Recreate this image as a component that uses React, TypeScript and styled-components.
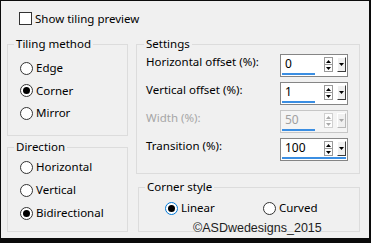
import React from "react"
import styled, { createGlobalStyle } from "styled-components"

const GlobalStyle = createGlobalStyle`
  html, body {
    margin: 0;
    padding: 0;
    background: #f0f0f0;
  }
  body {
    font-family: "Noto Sans", "Open Sans", sans-serif;
    font-size: 11.5px;
    color: #000;
  }
`

interface ArrowProps {
  up?: boolean
  color: string
}

const Arrow: React.FC<ArrowProps> = ({ up, color }) => (
  <svg width="5" height="3" viewBox="0 0 5 3">
    <polygon points={up ? "0,3 2.5,0 5,3" : "0,0 5,0 2.5,3"} fill={color} />
  </svg>
)

interface RadioProps {
  label: string
  checked?: boolean
  focused?: boolean
  width?: number
}

const Radio: React.FC<RadioProps> = ({ label, checked, focused, width }) => (
  <S.RadioRow $width={width}>
    <S.RadioCircle $focused={focused}>{checked && <S.RadioDot />}</S.RadioCircle>
    {label}
  </S.RadioRow>
)

interface SpinProps {
  label: string
  value: string
  fill: number
  disabled?: boolean
}

const SpinRow: React.FC<SpinProps> = ({ label, value, fill, disabled }) => {
  const arrow = disabled ? "#a8a8a8" : "#000"
  return (
    <S.FieldRow>
      <S.FieldLabel $disabled={disabled}>{label}</S.FieldLabel>
      <S.Spin $disabled={disabled}>
        <S.SpinTop>
          <S.SpinValue $disabled={disabled}>{value}</S.SpinValue>
          <S.UpDown>
            <S.Step $disabled={disabled}>
              <Arrow up color={arrow} />
            </S.Step>
            <S.Step $disabled={disabled}>
              <Arrow color={arrow} />
            </S.Step>
          </S.UpDown>
          <S.Drop $disabled={disabled}>
            <Arrow color={arrow} />
          </S.Drop>
        </S.SpinTop>
        <S.Bar $fill={fill} />
      </S.Spin>
    </S.FieldRow>
  )
}

export default function App() {
  return (
    <>
      <GlobalStyle />
      <S.Frame>
        <S.Header>
          <S.CheckBox />
          Show tiling preview
        </S.Header>
        <S.Columns>
          <S.Column $gap={3}>
            <S.Group $h={100} $pad={12} $top={8} $gap={6.5}>
              <S.Legend $shift={-6}>Tiling method</S.Legend>
              <Radio label="Edge" />
              <Radio label="Corner" checked />
              <Radio label="Mirror" />
            </S.Group>
            <S.Group $h={93} $pad={12} $top={4} $gap={7}>
              <S.Legend $shift={-6}>Direction</S.Legend>
              <Radio label="Horizontal" />
              <Radio label="Vertical" />
              <Radio label="Bidirectional" checked />
            </S.Group>
          </S.Column>
          <S.Column $gap={5}>
            <S.Group $h={138} $pad={9} $right={11} $top={2} $gap={5}>
              <S.Legend $shift={-2}>Settings</S.Legend>
              <SpinRow label="Horizontal offset (%):" value="0" fill={33} />
              <SpinRow label="Vertical offset (%):" value="1" fill={33} />
              <SpinRow label="Width (%):" value="50" fill={33} disabled />
              <SpinRow label="Transition (%):" value="100" fill={64} />
            </S.Group>
            <S.Group $h={53} $pad={26} $top={5} $gap={0} $indent={2}>
              <S.Legend $shift={-20}>Corner style</S.Legend>
              <S.OptionLine>
                <Radio label="Linear" checked focused width={98} />
                <Radio label="Curved" />
              </S.OptionLine>
            </S.Group>
          </S.Column>
        </S.Columns>
        <S.Watermark>©ASDwedesigns_2015</S.Watermark>
      </S.Frame>
    </>
  )
}

const S = {
  Frame: styled.div`
    position: relative;
    box-sizing: border-box;
    width: 371px;
    height: 243px;
    border-style: solid;
    border-color: #0b0b0b;
    border-width: 1px 2px 5px 1px;
    background: #f0f0f0;
    padding: 11px 0 0 6px;
    display: flex;
    flex-direction: column;
  `,
  Header: styled.label`
    display: flex;
    align-items: center;
    gap: 3px;
    height: 13px;
    padding-left: 12px;
    line-height: 16px;
  `,
  CheckBox: styled.span`
    box-sizing: border-box;
    width: 13px;
    height: 13px;
    border: 1px solid #333;
    background: #fff;
  `,
  Columns: styled.div`
    display: grid;
    grid-template-columns: 121px 224px;
    column-gap: 8px;
    margin-top: 11px;
  `,
  Column: styled.div<{ $gap: number }>`
    display: flex;
    flex-direction: column;
    gap: ${({ $gap }) => $gap}px;
  `,
  Group: styled.fieldset<{
    $h: number
    $pad: number
    $top: number
    $gap: number
    $right?: number
    $indent?: number
  }>`
    box-sizing: border-box;
    min-width: 0;
    height: ${({ $h }) => $h}px;
    margin: 0 0 0 ${({ $indent }) => $indent || 0}px;
    border: 1px solid #dcdcdc;
    padding: ${({ $top }) => $top}px ${({ $right }) => $right || 0}px 0 ${({ $pad }) => $pad}px;
    display: flex;
    flex-direction: column;
    gap: ${({ $gap }) => $gap}px;
  `,
  Legend: styled.legend<{ $shift: number }>`
    margin-left: ${({ $shift }) => $shift}px;
    padding: 0 2px;
    line-height: 16px;
    font-size: 11.5px;
  `,
  RadioRow: styled.label<{ $width?: number }>`
    display: flex;
    align-items: center;
    gap: 3px;
    height: 16px;
    line-height: 16px;
    width: ${({ $width }) => ($width ? `${$width}px` : "auto")};
    flex: none;
  `,
  RadioCircle: styled.span<{ $focused?: boolean }>`
    box-sizing: border-box;
    width: 13px;
    height: 13px;
    border-radius: 50%;
    border: 1px solid ${({ $focused }) => ($focused ? "#0078d7" : "#333")};
    background: #fff;
    display: flex;
    align-items: center;
    justify-content: center;
  `,
  RadioDot: styled.span`
    width: 7px;
    height: 7px;
    border-radius: 50%;
    background: #000;
  `,
  OptionLine: styled.div`
    display: flex;
    align-items: center;
  `,
  FieldRow: styled.div`
    display: flex;
    align-items: flex-start;
    justify-content: space-between;
    height: 23px;
  `,
  FieldLabel: styled.span<{ $disabled?: boolean }>`
    line-height: 16px;
    color: ${({ $disabled }) => ($disabled ? "#a6a6a6" : "#000")};
  `,
  Spin: styled.div<{ $disabled?: boolean }>`
    box-sizing: border-box;
    width: 68px;
    height: 23px;
    padding-right: 1px;
    border: 1px solid ${({ $disabled }) => ($disabled ? "#c6c6c6" : "#858585")};
    background: ${({ $disabled }) => ($disabled ? "#f4f4f4" : "#fff")};
    display: flex;
    flex-direction: column;
  `,
  SpinTop: styled.div`
    display: flex;
    height: 18px;
  `,
  SpinValue: styled.span<{ $disabled?: boolean }>`
    flex: 1;
    padding-left: 4px;
    line-height: 17px;
    font-size: 12px;
    color: ${({ $disabled }) => ($disabled ? "#a0a0a0" : "#000")};
  `,
  UpDown: styled.div`
    width: 9px;
    margin-top: 2px;
    display: flex;
    flex-direction: column;
  `,
  Step: styled.div<{ $disabled?: boolean }>`
    box-sizing: border-box;
    height: 8px;
    border: 1px solid ${({ $disabled }) => ($disabled ? "#d0d0d0" : "#9a9a9a")};
    background: #fdfdfd;
    display: flex;
    align-items: center;
    justify-content: center;
    & + & {
      margin-top: -1px;
    }
  `,
  Drop: styled.div<{ $disabled?: boolean }>`
    box-sizing: border-box;
    width: 9px;
    height: 15px;
    margin: 2px 0 0 4px;
    border: 1px solid;
    border-color: #fff ${({ $disabled }) => ($disabled ? "#b8b8b8 #b8b8b8" : "#3c3c3c #3c3c3c")} #fff;
    background: #f0f0f0;
    display: flex;
    align-items: center;
    justify-content: center;
  `,
  Bar: styled.div<{ $fill: number }>`
    margin-left: 1px;
    width: ${({ $fill }) => $fill}px;
    height: 2px;
    background: #3b8ee2;
  `,
  Watermark: styled.div`
    position: absolute;
    left: 192px;
    top: 220px;
    font-family: "Liberation Sans", Arial, sans-serif;
    font-size: 12.5px;
    line-height: 15px;
    color: #1e1e1e;
    white-space: nowrap;
  `,
}
